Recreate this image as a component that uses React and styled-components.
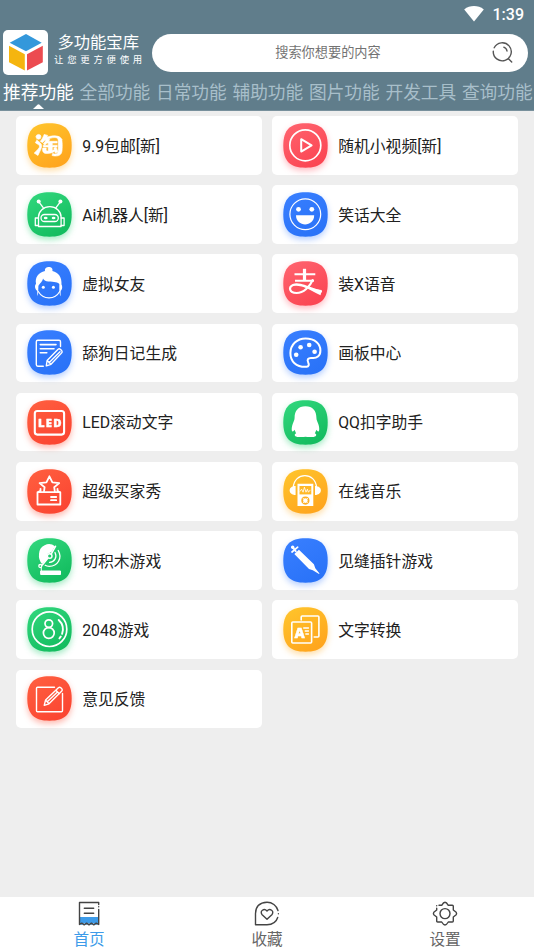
import React from 'react';
import styled, { createGlobalStyle } from 'styled-components';
import { AiOutlineTaobao } from 'react-icons/ai';

const GlobalStyle = createGlobalStyle`
  * { box-sizing: border-box; }
  body {
    margin: 0;
    background: #eeeeee;
    font-family: Roboto, "Noto Sans CJK SC", sans-serif;
    overflow: hidden;
  }
`;

const Screen = styled.div`
  display: flex;
  flex-direction: column;
  width: 534px;
  height: 949px;
  overflow: hidden;
  background: #eeeeee;
`;

const Header = styled.header`
  display: flex;
  flex-direction: column;
  flex: none;
  height: 111px;
  background: #607d8b;
  border-bottom: 1px solid #78909c;
  color: #fff;
`;

const StatusBar = styled.div`
  display: flex;
  justify-content: flex-end;
  align-items: center;
  gap: 9px;
  height: 30px;
  padding: 0 10px 3px 0;
`;

const Clock = styled.span`
  padding-top: 2px;
  font-size: 16px;
  line-height: 20px;
  font-weight: 500;
`;

const BrandRow = styled.div`
  display: flex;
  align-items: flex-start;
  height: 45px;
  padding-left: 3px;
`;

const Logo = styled.div`
  width: 45px;
  height: 45px;
  border-radius: 5px;
  background: #fff;
`;

const Brand = styled.div`
  display: flex;
  flex-direction: column;
  width: 103.5px;
  padding-left: 6px;
`;

const BrandTitle = styled.div`
  margin: 1.5px 0 0 3.5px;
  font-size: 16.3px;
  line-height: 21px;
  white-space: nowrap;
`;

const BrandSubtitle = styled.div`
  font-size: 9.4px;
  line-height: 13px;
  letter-spacing: 3.75px;
  white-space: nowrap;
`;

const SearchBox = styled.div`
  display: flex;
  align-items: center;
  width: 376px;
  height: 38.5px;
  margin-top: 3.5px;
  padding-right: 14px;
  border-radius: 20px;
  background: #fff;
`;

const SearchHint = styled.span`
  flex: 1;
  padding: 1px 0 0 14px;
  text-align: center;
  font-size: 13.2px;
  line-height: 20px;
  color: #737373;
`;

const Tabs = styled.nav`
  display: flex;
  gap: 5.7px;
  padding: 6px 0 0 3px;
`;

const Tab = styled.div`
  display: flex;
  flex-direction: column;
  align-items: center;
  flex: none;
  width: 70.8px;
  font-size: 17.7px;
  line-height: 24px;
  white-space: nowrap;
  color: ${(p) => (p.$active ? '#fff' : '#a8bfca')};
`;

const Caret = styled.svg`
  width: 11px;
  height: 5px;
  margin-top: -1px;
`;

const Content = styled.main`
  flex: 1;
  padding: 5px 16px 0;
`;

const Grid = styled.div`
  display: grid;
  grid-template-columns: 246px 246px;
  grid-auto-rows: 58.6px;
  gap: 10.6px 10px;
`;

const Card = styled.div`
  display: flex;
  align-items: center;
  gap: 10.2px;
  padding-left: 11px;
  border-radius: 5px;
  background: #fff;
`;

const tones = {
  yellow: ['#ffc62c', '#ffa61e', 'rgba(255,176,40,.4)'],
  red: ['#ff6570', '#fb4653', 'rgba(255,80,95,.38)'],
  green: ['#32d87e', '#14bd60', 'rgba(30,205,110,.4)'],
  blue: ['#397fff', '#2a73f8', 'rgba(50,120,255,.35)'],
  orange: ['#ff6040', '#fb4632', 'rgba(255,75,50,.4)'],
};

const Tile = styled.svg`
  flex: none;
  width: 45px;
  height: 45px;
  overflow: visible;
  fill: none;
  stroke: #fff;
  stroke-linecap: round;
  stroke-linejoin: round;
  filter: drop-shadow(0 3px 3px ${(p) => tones[p.$tone][2]});
`;

const CardLabel = styled.span`
  padding-top: 2.5px;
  font-size: 15.8px;
  line-height: 24px;
  color: #212121;
  white-space: nowrap;
`;

const BottomNav = styled.footer`
  display: grid;
  grid-template-columns: repeat(3, 178px);
  flex: none;
  height: 52px;
  background: #fff;
`;

const NavItem = styled.div`
  display: flex;
  flex-direction: column;
  align-items: center;
  padding-top: 4px;
  font-size: 15.6px;
  line-height: 20px;
  color: ${(p) => (p.$active ? '#3d9be9' : '#666')};
`;

const NavIcon = styled.svg`
  width: 26px;
  height: 25px;
  margin-bottom: 4px;
  fill: none;
  stroke: #444;
  stroke-width: 1.4;
  stroke-linecap: round;
  stroke-linejoin: round;
`;

const TileText = styled.text`
  font-family: "Open Sans", sans-serif;
  font-weight: 800;
  fill: #fff;
  stroke: #fff;
  stroke-width: 0.4;
`;

const glyphs = {
  taobao: (
    <g transform="translate(3.2 4.2)">
      <AiOutlineTaobao size={36} color="#fff" stroke="#fff" strokeWidth="18" />
    </g>
  ),
  play: (
    <g strokeWidth="1.7">
      <circle cx="22.3" cy="22.3" r="15.5" />
      <path d="M18.2 16.2v12.4l10.4-6.2z" strokeWidth="2" />
    </g>
  ),
  robot: (
    <g strokeWidth="1.3">
      <path d="M11.5 34.5V25a11.3 10.3 0 0 1 22.6 0v9.5z" />
      <path d="M11.500 26H8.300v7.500h3.200M34.100 26h3v7.500h-3M16.200 15.700l-4-5.300M29 15.700l4-5.300" />
      <rect x="14" y="22.5" width="17.3" height="7" rx="3.5" />
      <g fill="#fff" stroke="none">
        <circle cx="11.7" cy="9.5" r="2" /><circle cx="33.4" cy="9.5" r="2" />
        <ellipse cx="18.7" cy="26" rx="1.9" ry="1.3" /><ellipse cx="26.6" cy="26" rx="1.9" ry="1.3" />
      </g>
    </g>
  ),
  smile: (
    <g>
      <circle cx="22.3" cy="22.2" r="15.4" strokeWidth="1.2" />
      <g fill="#fff" stroke="none">
        <circle cx="15.5" cy="17.3" r="2.4" /><circle cx="28.8" cy="17.3" r="2.4" />
        <path d="M13 23.3h18.2c0 12.2-18.2 12.2-18.2 0z" />
      </g>
    </g>
  ),
  girl: (
    <g>
      <path fill="#fff" stroke="none" d="M18 10C16.8 4.8 26.8 4.4 25.4 9.9C31.5 11.5 35 16 34.5 23.5C36 26.5 34.8 29 33.6 30V35.2C31.8 32 32.5 26 32.3 23C31.5 21.2 27 21 21.5 20.5C18.5 20.2 16.5 19 16 17.4C15.8 20.5 12.5 22.2 11.4 25C11 29 12 32 10.3 35.3V30C8 28.4 7.2 25 9 22.8C7.8 16 11.5 11.5 18 10z" />
      <path d="M11.3 30.5c4.8 8.3 16.5 8.6 21.4 0" strokeWidth="1.1" />
      <g fill="#fff" stroke="none"><circle cx="16.3" cy="26.3" r="1.5" /><circle cx="26.4" cy="26.3" r="1.5" /></g>
    </g>
  ),
  note: (
    <g strokeWidth="1.4">
      <path d="M33.5 16.5v-4.8q0-1.5-1.5-1.5H10.8q-1.5 0-1.5 1.5v22.8q0 1.7 1.5 1.7h5.5" />
      <path d="M13.3 14.6H29M13.3 18.7H27M13.3 22.8h6.5" strokeWidth="1.6" />
      <path d="M19.3 35.8l.8-5.3 11-11.2q1.2-1 2.400 .1l1.2 1.2q1 1.2 0 2.300L24 34.300zM22 32.700l11-11M20.100 30.500l3.900 3.800" />
    </g>
  ),
  alipay: (
    <g>
      <path d="M11.5 13.2h20.8M12 19.7h19" strokeWidth="2" strokeLinecap="butt" />
      <path d="M21.5 7.8v12" strokeWidth="3.2" strokeLinecap="butt" />
      <path d="M29.6 19.2C27 25.5 20.5 32 13.5 32C6 32 5.4 26 10 24C17 21.5 26 27.5 38 30.5" strokeWidth="2.2" />
      <path fill="#fff" stroke="none" d="M21 25c6 2 12 3.5 17.8 4l-1.3 5.3C31 31.5 26 28 21 26z" />
    </g>
  ),
  palette: (
    <g>
      <path d="M23.6 36.8C13 37.4 7.3 31.2 7.4 23C7.6 14.5 14 8.5 22.6 8.5C31.8 8.5 37.4 13.7 37.4 20.4C37.4 25.8 33.8 28.7 28.5 27.9C24.8 27.7 23.9 29.8 25.2 32.4C26.4 34.6 25.7 36.5 23.6 36.8z" strokeWidth="2" />
      <g fill="#fff" stroke="none">
        <circle cx="13.2" cy="24.8" r="2.3" /><circle cx="17.6" cy="17.2" r="2.3" />
        <circle cx="26.2" cy="15" r="2.3" /><circle cx="31.6" cy="21.8" r="2.3" />
      </g>
    </g>
  ),
  led: (
    <g>
      <rect x="7.8" y="11" width="29.3" height="23.6" rx="2.5" strokeWidth="2.1" />
      <TileText x="11" y="27" fontSize="11.3" textLength="23.5">LED</TileText>
    </g>
  ),
  penguin: (
    <path fill="#fff" stroke="none" d="M22.5 6.2C29.8 6.2 33.4 11 33.4 17.5C33.4 20 34.2 21 35.2 23.8C36.4 27.2 36.7 31 35.5 31.4C34.7 31.7 33.8 30.4 33.4 29.7C33 31.2 32.2 32.6 31.8 33.2C34.4 34.3 33.500 37 29.300 37C26.500 37.200 24 37 22.500 36.800C21 37 18.500 37.200 15.700 37C11.500 37 10.600 34.300 13.200 33.200C12.800 32.600 12 31.200 11.600 29.700C11.200 30.400 10.300 31.700 9.500 31.400C8.300 31 8.600 27.200 9.800 23.800C10.800 21 11.600 20 11.600 17.500C11.600 11 15.200 6.200 22.500 6.200z" />
  ),
  show: (
    <g strokeWidth="1.8">
      <path d="M12.5 22.200l-1.800 1h-.200v12.300h22.800V23.200h-.300l-1.800-1M10.700 23.200h22.600" />
      <path d="M17 22.500l.6-4.300-5-4.100 6.800-.8 3-6 3 6 6.800.8-5 4.100.6 4.300M13.500 22.800v-3M30.500 22.800v-3" />
      <path d="M24 28h5.200M24 31.200h5.200" />
    </g>
  ),
  music: (
    <g>
      <path d="M10.3 18.5C11 2.7 32.8 2.7 33.5 18.5" strokeWidth="1.3" />
      <path fill="#fff" stroke="none" d="M12.6 17v9c-7.600 0-8.200-9 0-9zM32 17v9c7.600 0 8.200-9 0-9zM14.500 14.700h15.800v22.400H14.500z" />
      <path d="M16.5 17h11.800v8.400H16.500z" fill="#ffb827" stroke="none" />
      <path d="M17.200 22.200l1.400-2 1.500 3 1.300-5 1.600 5 1.400-3 1 3 1.700-2" strokeWidth=".8" />
      <circle cx="22.4" cy="31.6" r="3.2" stroke="#ffaf22" strokeWidth="1.8" />
      <path d="M19.800 29l1.400 1.400M25 29l-1.400 1.400M19.800 34.200l1.400-1.400M25 34.200l-1.400-1.400" strokeWidth=".8" />
    </g>
  ),
  saw: (
    <g>
      <path fill="#fff" stroke="none" d="M28 8.2A10 10 0 0 0 12 16a13 13 0 0 0 3 10l5-4.5.5-5.500 4-2z" />
      <circle cx="22.7" cy="18" r="2.3" fill="#25ca70" strokeWidth="1.4" />
      <path d="M28.500 8.300L24.300 15.800M20.800 20.200L15.300 27" strokeWidth="1.6" />
      <circle cx="13.3" cy="28" r="1.5" strokeWidth="1.3" />
      <path d="M31.200 12.500c4.500 7.500-.5 15.800-9 15.800q-2.500 0-4-1M28 14.500c2.500 5-.6 9.500-5.500 9.800" strokeWidth="1.3" />
      <path d="M14.300 29.500v6M14 33h19.500v3.500H14z" fill="#fff" strokeWidth="1" />
    </g>
  ),
  eight: (
    <g strokeWidth="1.7">
      <circle cx="22.5" cy="22.200" r="17.3" />
      <circle cx="21.8" cy="16.600" r="3.800" /><circle cx="21.800" cy="26" r="5.400" />
      <path d="M31.700 13c5.300 5 5.400 13.300.7 18.400" strokeWidth="1.900" strokeDasharray="15 3 8" />
    </g>
  ),
  syringe: (
    <g>
      <path d="M9 14l5.700-4.800M9.200 9.100l3.700 4.300" strokeWidth="1.7" />
      <circle cx="9.700" cy="9.300" r="1.700" fill="#fff" stroke="none" />
      <path fill="#fff" stroke="none" d="M11.300 16l4.600-4.300 15 14.600 1.400 4L36.500 35.500l-.5.6-6.200-3.800-3.800-1.300z" />
    </g>
  ),
  convert: (
    <g strokeWidth="1.600">
      <path d="M18.200 13v-3q0-1 1-1h15.700q1 0 1 1v19q0 1-1 1h-3.700" />
      <rect x="8.800" y="15" width="19.800" height="21" rx="1" />
      <TileText x="11.500" y="31" fontSize="14">A</TileText>
      <path d="M20.700 21h4.800M22.200 24h3.300M22.800 27h2.700" strokeWidth="1.300" />
    </g>
  ),
  edit: (
    <g strokeWidth="1.400">
      <path d="M27.500 11.200H10.500q-1 0-1 1v22.500q0 1 1 1h24q1 0 1-1V17.500" />
      <path d="M17.200 29.400l1.400-5.400 12.800-12.300q1.200-1.100 2.400 0l1 1q1 1.200 0 2.400L22 27.800zM18.600 24l3.400 3.800M28.800 14.200l3.500 3.600M20.500 25.500L30.500 16" />
    </g>
  ),
};

const features = [
  ['9.9包邮[新]', 'yellow', 'taobao'],
  ['随机小视频[新]', 'red', 'play'],
  ['Ai机器人[新]', 'green', 'robot'],
  ['笑话大全', 'blue', 'smile'],
  ['虚拟女友', 'blue', 'girl'],
  ['装X语音', 'red', 'alipay'],
  ['舔狗日记生成', 'blue', 'note'],
  ['画板中心', 'blue', 'palette'],
  ['LED滚动文字', 'orange', 'led'],
  ['QQ扣字助手', 'green', 'penguin'],
  ['超级买家秀', 'orange', 'show'],
  ['在线音乐', 'yellow', 'music'],
  ['切积木游戏', 'green', 'saw'],
  ['见缝插针游戏', 'blue', 'syringe'],
  ['2048游戏', 'green', 'eight'],
  ['文字转换', 'yellow', 'convert'],
  ['意见反馈', 'orange', 'edit'],
];

const tabs = ['推荐功能', '全部功能', '日常功能', '辅助功能', '图片功能', '开发工具', '查询功能'];

function FeatureCard({ label, tone, glyph }) {
  return (
    <Card>
      <Tile viewBox="0 0 45 45" $tone={tone}>
        <defs>
          <linearGradient id={`tile-${glyph}`} x1="0" y1="0" x2=".6" y2="1">
            <stop offset="0" stopColor={tones[tone][0]} />
            <stop offset="1" stopColor={tones[tone][1]} />
          </linearGradient>
        </defs>
        <path
          fill={`url(#tile-${glyph})`}
          stroke="none"
          d="M22.5 .3C38 .3 44.7 7 44.7 22.5S38 44.7 22.5 44.7S.3 38 .3 22.5S7 .3 22.5 .3z"
        />
        {glyphs[glyph]}
      </Tile>
      <CardLabel>{label}</CardLabel>
    </Card>
  );
}

export default function App() {
  return (
    <Screen>
      <GlobalStyle />
      <Header>
        <StatusBar>
          <svg width="20" height="16" viewBox="0 0 20 16">
            <path d="M.2 3.4C6-1 14-1 19.8 3.4L10 15.6z" fill="#fff" />
          </svg>
          <Clock>1:39</Clock>
        </StatusBar>
        <BrandRow>
          <Logo>
            <svg width="45" height="45" viewBox="0 0 45 45">
              <path d="M23 4L38.7 12.8L23 21.3L6.7 12.8z" fill="#3498db" />
              <path d="M6 15.8L21.8 24.2V40.5L6 32.3z" fill="#f5b50f" />
              <path d="M39.8 15.8L24 24.2V40.5L39.8 32.3z" fill="#ec4b50" />
            </svg>
          </Logo>
          <Brand>
            <BrandTitle>多功能宝库</BrandTitle>
            <BrandSubtitle>让您更方便使用</BrandSubtitle>
          </Brand>
          <SearchBox>
            <SearchHint>搜索你想要的内容</SearchHint>
            <svg width="23" height="23" viewBox="0 0 23 23" fill="none" stroke="#555" strokeWidth="1.4" strokeLinecap="round">
              <path d="M3.2 6.8A9 9 0 1 1 2.3 10.1M17.2 17.500l3.500 3.500M12.8 6.200q2.800 1 3.200 3.800" />
            </svg>
          </SearchBox>
        </BrandRow>
        <Tabs>
          {tabs.map((name, i) => (
            <Tab key={name} $active={i === 0}>
              {name}
              {i === 0 && (
                <Caret viewBox="0 0 11 5"><path d="M0 5L4.5 .7Q5.5 0 6.5 .7L11 5z" fill="#fff" /></Caret>
              )}
            </Tab>
          ))}
        </Tabs>
      </Header>
      <Content>
        <Grid>
          {features.map(([label, tone, glyph]) => (
            <FeatureCard key={label} label={label} tone={tone} glyph={glyph} />
          ))}
        </Grid>
      </Content>
      <BottomNav>
        <NavItem $active>
          <NavIcon viewBox="0 0 26 25">
            <path d="M3.5 16h19v7l-2.4 1-2.4-1.7-2.4 1.7-2.3-1.7-2.4 1.7-2.4-1.7L5.800 24l-2.300-1z" fill="#3d9be9" stroke="none" />
            <path d="M22.700 3.500V1.500H3.500V23.500l2.300-1.300 2.400 1.600 2.400-1.600 2.400 1.600 2.400-1.600 2.400 1.600 2.400-1.600 2.500 1.300V8.500M22.700 5.700v.1M8.300 7.300h9.400M8.300 12.200h9.400" />
          </NavIcon>
          首页
        </NavItem>
        <NavItem>
          <NavIcon viewBox="0 0 26 25">
            <path d="M24 9.500A11.300 11.300 0 0 0 13 1.300Q1.700 1.800 1.500 12.500V23.700H13Q21.500 23.500 23.700 16.500M24.400 12.700v.1" />
            <path d="M13 18.300L7.900 13.400C5.500 10 10 6.800 13 9.900C16 6.800 20.500 10 18.100 13.400z" />
          </NavIcon>
          收藏
        </NavItem>
        <NavItem>
          <NavIcon viewBox="0 0 26 25">
            <path d="M7 4.300H9.700Q11.500 1.300 13 1.300T16.300 4.300H20.300Q21.300 4.300 21.300 5.300V9L24.200 11.300Q25 12.600 24.200 13.700L21.300 16V20Q21.300 21 20.300 21H16.300Q14.500 24 13 24T9.700 21H5.700Q4.700 21 4.700 20V16L1.800 13.700Q1 12.600 1.800 11.300L4.700 9V7.300M4.700 4.700v.1" />
            <circle cx="13" cy="12.600" r="5" />
          </NavIcon>
          设置
        </NavItem>
      </BottomNav>
    </Screen>
  );
}
